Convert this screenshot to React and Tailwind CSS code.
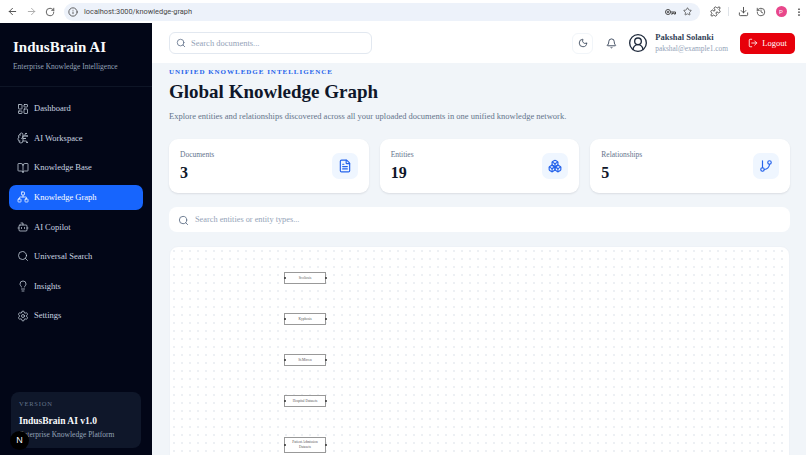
import React from "react";
import {
  ArrowLeft, ArrowRight, RotateCw, Info, Star, Puzzle, Download, Ellipsis,
  LayoutDashboard, BrainCircuit, BookOpen, Network, Bot, Search, Lightbulb, Settings,
  Moon, Bell, CircleUserRound, LogOut, FileText, Boxes, GitBranch, History,
} from "lucide-react";

const navItems = [
  { label: "Dashboard", icon: LayoutDashboard },
  { label: "AI Workspace", icon: BrainCircuit },
  { label: "Knowledge Base", icon: BookOpen },
  { label: "Knowledge Graph", icon: Network, active: true },
  { label: "AI Copilot", icon: Bot },
  { label: "Universal Search", icon: Search },
  { label: "Insights", icon: Lightbulb },
  { label: "Settings", icon: Settings },
];

const stats = [
  { label: "Documents", value: "3", icon: FileText },
  { label: "Entities", value: "19", icon: Boxes },
  { label: "Relationships", value: "5", icon: GitBranch },
];

const nodes = [
  { label: "Scoliosis", top: "top-[25px]", h: "h-[12px]" },
  { label: "Kyphosis", top: "top-[66px]", h: "h-[12px]" },
  { label: "St.Mirren", top: "top-[107px]", h: "h-[12px]" },
  { label: "Hospital Datasets", top: "top-[148px]", h: "h-[12px]" },
  { label: "Patient Admission Datasets", top: "top-[190px]", h: "h-[16px]" },
];

// Chrome's password manager key, lying on its side
const PasswordKey = () => (
  <svg width="11" height="8" viewBox="0 0 22 16" fill="none" stroke="currentColor" strokeWidth="2">
    <circle cx="6" cy="8" r="5" />
    <circle cx="6" cy="8" r="1.5" />
    <path d="M11 8h10v4h-3v-2h-3v2h-3" />
  </svg>
);

const App = () => {
  return (
    <div className="h-screen w-full overflow-hidden flex flex-col bg-[#f1f5f9] font-['Liberation_Serif',serif]">

      {/* Browser bar */}
      <div className="h-[23px] shrink-0 bg-white flex items-center pl-[6.5px] pr-[2px] font-['Roboto',sans-serif] text-[#474747]">
        <ArrowLeft size={11} />
        <ArrowRight size={11} className="text-[#a8a8a8] ml-[8px]" />
        <RotateCw size={10} className="ml-[8.5px]" />
        <div className="flex-1 h-[18px] ml-[9px] rounded-full bg-[#edf2fa] flex items-center pl-[4px] pr-[8px]">
          <Info size={10} />
          <span className="text-[7.4px] leading-none flex-1 ml-[6px]">localhost:3000/knowledge-graph</span>
          <PasswordKey />
          <Star size={9} className="ml-[7px]" />
        </div>
        <Puzzle size={11} className="ml-[9.5px]" />
        <div className="w-px h-[9px] ml-[7px] bg-[#dfe3e8]" />
        <Download size={11} className="ml-[9px]" />
        <History size={10} className="ml-[7.5px]" />
        <div className="w-[11px] h-[11px] ml-[9.5px] rounded-full bg-[#e8478b] text-white text-[6px] flex items-center justify-center">P</div>
        <Ellipsis size={10} className="rotate-90 ml-[7.5px]" />
      </div>

      <div className="flex-1 flex min-h-0">

        {/* Sidebar */}
        <aside className="relative w-[152px] shrink-0 bg-[#020617] text-white flex flex-col">
          <div className="h-[64px] px-[13px] pt-[15px] border-b border-[#0e1526]">
            <h1 className="text-[15px] leading-[19px] font-bold text-[#f8fafc]">IndusBrain AI</h1>
            <p className="text-[7.5px] leading-[10px] mt-[5px] text-[#94a3b8]">Enterprise Knowledge Intelligence</p>
          </div>

          <nav className="flex flex-col gap-[4.6px] px-[9px] pt-[9px]">
            {navItems.map((item) => (
              <div
                key={item.label}
                className={`h-[25px] rounded-[7px] flex items-center gap-[5px] pl-[8px] text-[8.5px] ${
                  item.active ? "bg-[#1765fd] text-white" : "text-[#cbd5e1]"
                }`}
              >
                <item.icon size={12} strokeWidth={1.5} />
                <span>{item.label}</span>
              </div>
            ))}
          </nav>

          <div className="mt-auto mx-[11px] mb-[7px] h-[56px] rounded-[8px] bg-[#0f172a] px-[8px] pt-[7px]">
            <p className="text-[6.5px] leading-[9px] tracking-[0.12em] text-[#64748b]">VERSION</p>
            <p className="text-[9.5px] leading-[12px] mt-[7px] font-bold text-[#f8fafc]">IndusBrain AI v1.0</p>
            <p className="text-[7.5px] leading-[10px] mt-[3px] text-[#94a3b8]">Enterprise Knowledge Platform</p>
          </div>

          {/* Next.js dev badge */}
          <div className="absolute left-[10px] top-[408px] w-[19px] h-[19px] rounded-full bg-black flex items-center justify-center text-white text-[9px] font-['Liberation_Sans',sans-serif]">
            N
          </div>
        </aside>

        <div className="flex-1 min-w-0 flex flex-col">

          {/* Top bar */}
          <header className="h-[40px] shrink-0 bg-white flex items-center pl-[17px] pr-[11px]">
            <div className="w-[203px] h-[22px] rounded-[6px] border border-[#e2e8f0] flex items-center pl-[6px] gap-[5px] text-[#94a3b8]">
              <Search size={10} className="text-[#64748b]" />
              <span className="text-[8.5px] pt-[1px]">Search documents...</span>
            </div>
            <div className="ml-auto w-[21px] h-[21px] rounded-[6px] border border-[#f1f5f9] flex items-center justify-center text-[#334155]">
              <Moon size={10} />
            </div>
            <Bell size={11} className="ml-[13px] text-[#334155]" />
            <CircleUserRound size={20} strokeWidth={1.6} className="ml-[11px] text-[#1e293b]" />
            <div className="ml-[7px]">
              <p className="text-[8.5px] leading-[11px] font-bold text-[#334155]">Pakshal Solanki</p>
              <p className="text-[7.4px] leading-[10px] mt-[1px] text-[#94a3b8]">pakshal@example1.com</p>
            </div>
            <button className="ml-[12px] w-[55px] h-[21px] rounded-[5px] bg-[#e7000b] text-white text-[8.5px] flex items-center justify-center gap-[4px]">
              <LogOut size={10} />
              Logout
            </button>
          </header>

          {/* Page */}
          <main className="flex-1 min-h-0 overflow-hidden pl-[17px] pr-[16px] pt-[4px]">
            <p className="text-[7px] leading-[10px] font-bold tracking-[0.14em] text-[#2563eb]">UNIFIED KNOWLEDGE INTELLIGENCE</p>
            <h2 className="text-[19px] leading-[26px] mt-[2px] font-bold text-[#0f172a]">Global Knowledge Graph</h2>
            <p className="text-[8.5px] leading-[12px] mt-[5px] text-[#64748b]">
              Explore entities and relationships discovered across all your uploaded documents in one unified knowledge network.
            </p>

            <div className="grid grid-cols-3 gap-[11px] mt-[17px]">
              {stats.map((stat) => (
                <div key={stat.label} className="h-[54px] rounded-[9px] bg-white shadow-[0_1px_2px_rgba(15,23,42,0.1)] flex items-center justify-between pl-[11px] pr-[11px]">
                  <div>
                    <p className="text-[7.5px] leading-[10px] text-[#64748b]">{stat.label}</p>
                    <p className="text-[16px] leading-[20px] mt-[3px] font-bold text-[#0f172a]">{stat.value}</p>
                  </div>
                  <div className="w-[26px] h-[26px] rounded-[7px] bg-[#eff6ff] flex items-center justify-center text-[#2563eb]">
                    <stat.icon size={14} />
                  </div>
                </div>
              ))}
            </div>

            <div className="h-[25px] mt-[14px] rounded-[8px] bg-white flex items-center pl-[9px] gap-[6px] text-[#94a3b8]">
              <Search size={11} className="text-[#64748b] mt-[1px]" />
              <span className="text-[8.3px] pt-[2px]">Search entities or entity types...</span>
            </div>

            {/* Graph canvas */}
            <div className="relative h-[260px] mt-[14px] rounded-[9px] border border-[#eef2f7] bg-white bg-[radial-gradient(#eceff3_0.7px,transparent_0.8px)] bg-[size:8px_8px]">
              {nodes.map((node) => (
                <div
                  key={node.label}
                  className={`absolute left-[114px] w-[42px] ${node.top} ${node.h} border border-[#999] bg-white flex items-center justify-center text-center px-[5px] text-[3.5px] leading-[5px] text-[#555]`}
                >
                  <span className="absolute -left-[1.5px] top-1/2 -mt-[1px] w-[2px] h-[2px] rounded-full bg-[#333]" />
                  <span className="absolute -right-[1.5px] top-1/2 -mt-[1px] w-[2px] h-[2px] rounded-full bg-[#333]" />
                  {node.label}
                </div>
              ))}
            </div>
          </main>
        </div>
      </div>
    </div>
  );
};

export default App;
